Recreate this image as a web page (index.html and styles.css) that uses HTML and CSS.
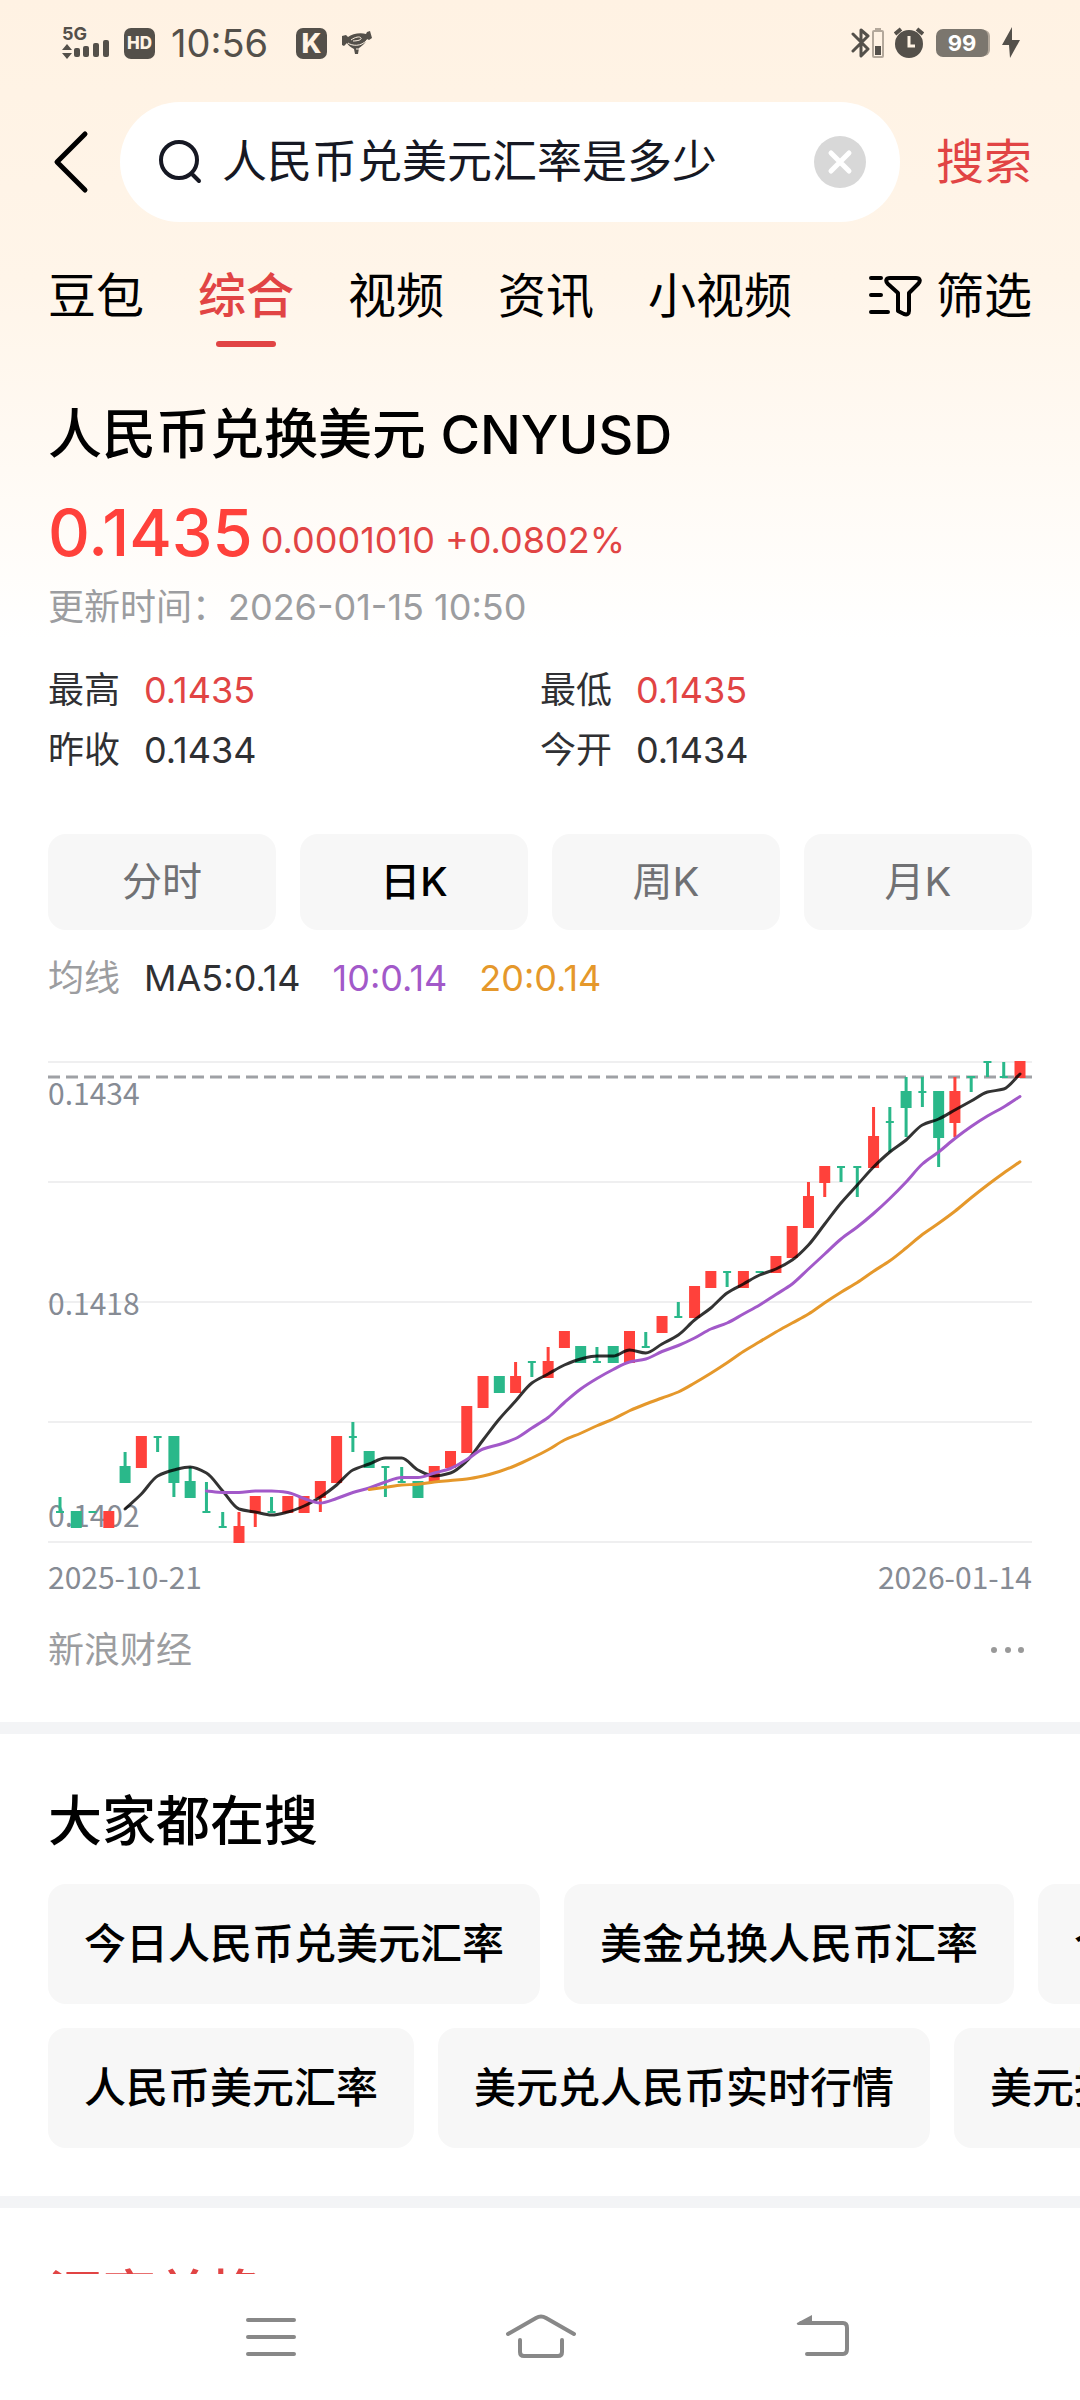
FILE: index.html
```html
<!DOCTYPE html>
<html lang="zh-CN">
<head>
    <meta charset="UTF-8">
    <meta name="viewport" content="width=device-width, initial-scale=1.0">
    <title>人民币兑美元汇率是多少</title>
    <link rel="stylesheet" href="styles.css">
</head>
<body>
    <div class="app">
        <div class="status-bar">
            <div class="status-group">
                <svg class="icon-signal" width="48" height="36" viewBox="0 0 48 36" fill="#54504a">
                    <text x="0" y="15" class="signal-text">5G</text>
                    <path d="M0 25l5-6 5 6zM0 28h10l-5 6z"/>
                    <rect x="12" y="23" width="6" height="9" rx="2"/>
                    <rect x="21" y="21" width="6" height="11" rx="2"/>
                    <rect x="31" y="18" width="6" height="14" rx="2"/>
                    <rect x="41" y="15" width="6" height="17" rx="2"/>
                </svg>
                <span class="badge badge-hd">HD</span>
                <span class="clock">10:56</span>
                <span class="badge badge-k">K</span>
                <svg class="icon-hands" width="30" height="24" viewBox="0 0 30 24">
                    <path fill="#54504a" d="M0 5l4-1 2 2c4-3 12-5 18-3l1-2 3-1 2 7-3 2-2-1c-1 4-5 7-8 9l-1 6h-3l-1-5C8 16 6 14 5 12l-3 3-2-1z"/>
                    <path fill="none" stroke="#fff3e4" stroke-width="1" d="M9 9c4-3 9-4 10-2s-4 3-8 3M6 12c4 3 13 4 19-3M14 18h3"/>
                </svg>
            </div>
            <div class="status-group">
                <svg width="34" height="32" viewBox="0 0 34 32" fill="none">
                    <path stroke="#54504a" stroke-width="3" stroke-linejoin="round" stroke-linecap="round" d="M2 7l15 15-7 7V3l7 6L2 24"/>
                    <rect x="22" y="4" width="10" height="26" rx="1" stroke="#b3a89b" stroke-width="2"/>
                    <path fill="#b3a89b" d="M24 1h6v3h-6z"/>
                    <path fill="#54504a" d="M24 19h6v9h-6z"/>
                </svg>
                <svg class="icon-alarm" width="30" height="32" viewBox="0 0 30 32" fill="none">
                    <circle cx="15" cy="17" r="14" fill="#54504a"/>
                    <path stroke="#54504a" stroke-width="4" d="M1 7l6-5M29 7l-6-5"/>
                    <path stroke="#fff3e4" stroke-width="3" d="M15 9v10h6"/>
                </svg>
                <span class="battery">99</span>
                <svg class="icon-bolt" width="18" height="32" viewBox="0 0 18 32">
                    <path fill="#54504a" d="M10 0L0 18h7l1 13L18 13h-8z"/>
                </svg>
            </div>
        </div>

        <form class="search-row">
            <button type="button" class="back" aria-label="返回">
                <svg width="36" height="64" viewBox="0 0 36 64">
                    <path fill="none" stroke="#000" stroke-width="5" stroke-linecap="round" stroke-linejoin="round" d="M32 4L4 32l28 28"/>
                </svg>
            </button>
            <div class="search-box">
                <svg width="46" height="46" viewBox="0 0 46 46">
                    <g fill="none" stroke="#161823" stroke-width="4" stroke-linecap="round">
                        <circle cx="22" cy="21" r="18"/>
                        <path d="M36 36l6 6"/>
                    </g>
                </svg>
                <input type="text" class="search-input" aria-label="搜索内容" value="人民币兑美元汇率是多少">
                <button type="button" class="clear" aria-label="清除">
                    <svg width="52" height="52" viewBox="0 0 52 52">
                        <circle cx="26" cy="26" r="26" fill="#d8d8d8"/>
                        <path stroke="#fff" stroke-width="5" stroke-linecap="round" d="M17 17l18 18M35 17L17 35"/>
                    </svg>
                </button>
            </div>
            <button type="submit" class="search-submit">搜索</button>
        </form>

        <nav class="tabs">
            <a href="#" class="tab">豆包</a>
            <a href="#" class="tab active">综合</a>
            <a href="#" class="tab">视频</a>
            <a href="#" class="tab">资讯</a>
            <a href="#" class="tab">小视频</a>
            <button type="button" class="filter">
                <svg width="54" height="42" viewBox="0 0 54 42">
                    <path fill="none" stroke="#000" stroke-width="4" stroke-linecap="round" stroke-linejoin="round" d="M3 3h10M3 20h10M3 37h17M22 3h26c4 0 5 3 2 6l-9 9v18c0 3-2 4-5 3l-6-3V18L20 9c-3-3-2-6 2-6z"/>
                </svg>
                筛选
            </button>
        </nav>

        <main class="results">
            <section class="quote">
                <h1 class="quote-title">人民币兑换美元 CNYUSD</h1>
                <div class="quote-price">
                    <span class="price">0.1435</span>
                    <span class="change">0.0001010 +0.0802%</span>
                </div>
                <p class="updated">更新时间：2026-01-15 10:50</p>

                <dl class="stats">
                    <div class="stat"><dt>最高</dt><dd class="up">0.1435</dd></div>
                    <div class="stat"><dt>最低</dt><dd class="up">0.1435</dd></div>
                    <div class="stat"><dt>昨收</dt><dd>0.1434</dd></div>
                    <div class="stat"><dt>今开</dt><dd>0.1434</dd></div>
                </dl>

                <div class="periods">
                    <button type="button" class="period">分时</button>
                    <button type="button" class="period active">日K</button>
                    <button type="button" class="period">周K</button>
                    <button type="button" class="period">月K</button>
                </div>

                <div class="legend">
                    <span class="legend-name">均线</span>
                    <span class="ma5">MA5:0.14</span>
                    <span class="ma10">10:0.14</span>
                    <span class="ma20">20:0.14</span>
                </div>

                <svg class="chart" id="chart" viewBox="0 -6 984 492">
                    <path class="grid-line" d="M0 0h984M0 120h984M0 240h984M0 360h984M0 480h984"/>
                    <path class="last-line" d="M0 15h984"/>
                    <text class="axis" x="0" y="43">0.1434</text>
                    <text class="axis" x="0" y="253">0.1418</text>
                    <text class="axis" x="0" y="465">0.1402</text>
                </svg>
                <div class="dates">
                    <span>2025-10-21</span>
                    <span>2026-01-14</span>
                </div>

                <div class="source">
                    <span>新浪财经</span>
                    <button type="button" class="more" aria-label="更多">
                        <svg width="42" height="12" viewBox="0 0 42 12" fill="#999">
                            <circle cx="4" cy="6" r="3"/>
                            <circle cx="18" cy="6" r="3"/>
                            <circle cx="31" cy="6" r="3"/>
                        </svg>
                    </button>
                </div>
            </section>

            <section class="related">
                <h2 class="section-title">大家都在搜</h2>
                <div class="chips">
                    <a href="#" class="chip">今日人民币兑美元汇率</a>
                    <a href="#" class="chip">美金兑换人民币汇率</a>
                    <a href="#" class="chip">今日美元汇率</a>
                </div>
                <div class="chips">
                    <a href="#" class="chip">人民币美元汇率</a>
                    <a href="#" class="chip">美元兑人民币实时行情</a>
                    <a href="#" class="chip">美元换人民币</a>
                </div>
            </section>

            <section class="related">
                <h2 class="section-title up">汇率兑换</h2>
            </section>
        </main>

        <div class="system-nav">
            <button type="button" aria-label="最近任务">
                <svg width="72" height="48" viewBox="0 0 72 48">
                    <path stroke="#888" stroke-width="4" stroke-linecap="round" d="M13 7h46M13 24h46M13 41h46"/>
                </svg>
            </button>
            <button type="button" aria-label="主屏幕">
                <svg width="72" height="48" viewBox="0 0 72 48">
                    <path fill="none" stroke="#888" stroke-width="4" stroke-linecap="round" stroke-linejoin="round" d="M3 21L31 5q5-3 10 0l28 16M15 27v12q0 4 4 4h34q4 0 4-4V27"/>
                </svg>
            </button>
            <button type="button" class="nav-back" aria-label="返回上一页">
                <svg width="72" height="48" viewBox="0 0 72 48">
                    <path fill="none" stroke="#888" stroke-width="4" stroke-linecap="round" d="M14 10h42q4 0 4 5v21q0 5-4 5H20"/>
                    <path fill="#888" d="M10 10L25 2v10H11q-2-1-1-2z"/>
                </svg>
            </button>
        </div>
    </div>

    <script src="chart.js"></script>
</body>
</html>
```

FILE: styles.css
```css
:root {
    --red: #e14444;
    --up: #ff413b;
    --down: #2ab88a;
    --text: #2f3033;
    --muted: #9c9da0;
    --status: #54504a;
    --tile: #f7f7f7;
}

* {
    box-sizing: border-box;
}

body {
    margin: 0;
    font-family: Inter, "Noto Sans CJK SC", sans-serif;
    font-size: 36px;
    line-height: 48px;
    color: #000;
}

h1, h2, p, dl, dd {
    margin: 0;
}

a {
    color: inherit;
    text-decoration: none;
}

button {
    padding: 0;
    border: none;
    background: none;
    font: inherit;
    color: inherit;
    cursor: pointer;
}

svg {
    display: block;
}

.app {
    display: flex;
    flex-direction: column;
    height: 100vh;
    background: #fff linear-gradient(#fff2e3, #fff5e9 280px, #fffaf4 470px, #fff 640px) no-repeat;
}

/* status bar */
.status-bar {
    display: flex;
    justify-content: space-between;
    height: 86px;
    padding: 0 60px 0 62px;
    color: var(--status);
}

.status-group {
    display: flex;
    align-items: center;
}

.icon-signal {
    overflow: visible;
}

.signal-text {
    font-size: 18px;
    font-weight: 700;
}

.badge {
    width: 31px;
    height: 31px;
    border-radius: 7px;
    background: var(--status);
    color: #fff3e4;
    text-align: center;
    font-weight: 800;
    line-height: 31px;
}

.badge-hd {
    margin: 0 16px 0 14px;
    font-size: 17px;
}

.badge-k {
    margin: 0 15px 0 28px;
    font-size: 27px;
}

.clock {
    font-size: 38px;
}

.icon-alarm {
    margin: 0 12px 0 9px;
}

.battery {
    width: 52px;
    height: 28px;
    margin-right: 14px;
    border-radius: 7px;
    background: #7b766e;
    box-shadow: 3px 0 0 -1px #b3a89b;
    color: #fff;
    text-align: center;
    font-size: 22px;
    font-weight: 700;
    line-height: 28px;
}

/* search */
.search-row {
    display: flex;
    align-items: center;
    padding: 16px 48px 0 53px;
}

.search-box {
    display: flex;
    flex: 1;
    align-items: center;
    min-width: 0;
    height: 120px;
    margin: 0 36px 0 31px;
    padding: 0 34px 0 37px;
    border-radius: 60px;
    background: #fff;
}

.search-input {
    flex: 1;
    min-width: 0;
    padding: 0 0 0 19px;
    border: none;
    outline: none;
    background: none;
    color: #161823;
    font: inherit;
    font-size: 45px;
    line-height: 60px;
}

.search-submit {
    flex: none;
    color: var(--red);
    font-size: 48px;
    line-height: 60px;
}

/* tabs */
.tabs {
    display: flex;
    align-items: flex-start;
    gap: 54px;
    margin-top: 44px;
    padding: 0 48px;
    font-size: 48px;
    line-height: 60px;
}

.tab {
    position: relative;
    padding-bottom: 21px;
}

.tab.active {
    color: var(--red);
    font-weight: 500;
}

.tab.active::after {
    content: "";
    position: absolute;
    bottom: 0;
    left: 18px;
    right: 18px;
    height: 6px;
    border-radius: 3px;
    background: var(--red);
}

.filter {
    display: flex;
    align-items: center;
    gap: 14px;
    margin-left: auto;
    line-height: 60px;
}

/* quote card */
.results {
    flex: 1;
    min-height: 0;
    overflow: hidden;
}

.quote {
    padding: 52px 48px 48px;
}

.quote-title,
.section-title {
    font-size: 54px;
    font-weight: 500;
    line-height: 72px;
}

.quote-price {
    display: flex;
    align-items: flex-end;
    gap: 8px;
    margin-top: 20px;
}

.price {
    color: var(--up);
    font-size: 65px;
    font-weight: 500;
    line-height: 84px;
}

.change {
    color: var(--red);
    line-height: 70px;
}

.updated {
    margin-top: 8px;
    color: var(--muted);
}

.stats {
    display: grid;
    grid-template-columns: 1fr 1fr;
    row-gap: 12px;
    margin-top: 35px;
    color: var(--text);
}

.stat {
    display: flex;
    gap: 24px;
}

.up {
    color: var(--red);
}

.periods {
    display: grid;
    grid-template-columns: repeat(4, 1fr);
    gap: 24px;
    margin-top: 60px;
}

.period {
    height: 96px;
    border-radius: 18px;
    background: var(--tile);
    color: #707174;
    font-size: 40px;
}

.period.active {
    color: #000;
    font-weight: 500;
}

.legend {
    display: flex;
    gap: 32px;
    margin-top: 24px;
}

.legend-name {
    margin-right: -8px;
    color: var(--muted);
}

.ma5 {
    color: var(--text);
}

.ma10 {
    color: #a259c9;
}

.ma20 {
    color: #e5982b;
}

/* chart */
.chart {
    width: 100%;
    margin-top: 54px;
}

.grid-line {
    stroke: #efeff0;
    stroke-width: 2;
}

.last-line {
    stroke: #9fa1a5;
    stroke-width: 3;
    stroke-dasharray: 12 6;
}

.axis {
    fill: #868b94;
    font-family: "Noto Sans CJK SC", sans-serif;
    font-size: 30px;
}

.candle-up {
    fill: var(--up);
}

.candle-down {
    fill: var(--down);
}

.ma-line {
    fill: none;
    stroke-width: 3;
    stroke-linecap: round;
}

.dates {
    display: flex;
    justify-content: space-between;
    margin-top: 10px;
    color: #868b94;
    font-family: "Noto Sans CJK SC", sans-serif;
    font-size: 30px;
    line-height: 36px;
}

.source {
    display: flex;
    align-items: center;
    justify-content: space-between;
    margin-top: 32px;
    color: var(--muted);
}

/* related searches */
.related {
    padding: 52px 48px 48px;
    border-top: 12px solid #f3f4f6;
    overflow: hidden;
}

.chips {
    display: flex;
    gap: 24px;
    margin-top: 24px;
}

.section-title + .chips {
    margin-top: 26px;
}

.chip {
    flex: none;
    padding: 30px 36px;
    border-radius: 18px;
    background: var(--tile);
    font-size: 42px;
    font-weight: 500;
    line-height: 60px;
}

/* system navigation */
.system-nav {
    display: flex;
    flex: none;
    justify-content: center;
    align-items: center;
    gap: 198px;
    height: 126px;
    padding-left: 14px;
    background: #fff;
}

.nav-back {
    margin-left: 12px;
}
```

FILE: chart.js
```js
// [up, bodyTop, bodyBottom, high, low] in steps of 0.0001 above 0.1402
const candles = [
    [0, 2, 2, 3, 2], [0, 2, 1, 2, 1], [0, 2, 2, 2, 2], [1, 2, 1, 2, 1], [0, 5, 4, 6, 4],
    [1, 7, 5, 7, 5], [0, 7, 7, 7, 6], [0, 7, 4, 7, 3], [0, 4, 3, 5, 3], [0, 2, 2, 4, 2],
    [0, 1, 1, 2, 1], [1, 1, 0, 2, 0], [1, 3, 2, 3, 1], [0, 2, 2, 3, 2], [1, 3, 2, 3, 2],
    [1, 3, 2, 3, 2], [1, 4, 3, 4, 2], [1, 7, 4, 7, 4], [0, 7, 7, 8, 6], [0, 6, 5, 6, 5],
    [0, 5, 5, 5, 3], [0, 4, 4, 5, 4], [0, 4, 3, 4, 3], [1, 5, 4, 5, 4], [1, 6, 5, 6, 5],
    [1, 9, 6, 9, 6], [1, 11, 9, 11, 9], [0, 11, 10, 11, 10], [1, 11, 10, 12, 10], [0, 12, 12, 12, 11],
    [1, 12, 11, 13, 11], [1, 14, 13, 14, 13], [0, 13, 12, 13, 12], [0, 12, 12, 13, 12], [0, 13, 12, 13, 12],
    [1, 14, 12, 14, 12], [0, 13, 13, 14, 13], [1, 15, 14, 15, 14], [0, 15, 15, 16, 15], [1, 17, 15, 17, 15],
    [1, 18, 17, 18, 17], [0, 18, 18, 18, 17], [1, 18, 17, 18, 17], [0, 18, 18, 18, 18], [1, 19, 18, 19, 18],
    [1, 21, 19, 21, 19], [1, 23, 21, 24, 21], [1, 25, 24, 25, 23], [0, 25, 25, 25, 24], [0, 25, 25, 25, 23],
    [1, 27, 25, 29, 25], [0, 28, 28, 29, 26], [0, 30, 29, 31, 27], [0, 30, 30, 31, 29], [0, 30, 27, 30, 25],
    [1, 30, 28, 31, 27], [0, 31, 31, 31, 30], [0, 32, 32, 32, 31], [0, 31, 31, 32, 31], [1, 32, 31, 32, 31]
];

const chart = document.getElementById('chart');
const x = i => 12 + i * 960 / 59;
const y = level => (32 - level) * 15;

function add(name, attrs) {
    const el = document.createElementNS('http://www.w3.org/2000/svg', name);
    for (const key in attrs) {
        el.setAttribute(key, attrs[key]);
    }
    chart.appendChild(el);
}

function bar(className, center, top, bottom, width) {
    add('rect', { class: className, x: center - width / 2, y: top, width: width, height: bottom - top });
}

candles.forEach(([up, top, bottom, high, low], i) => {
    const className = up ? 'candle-up' : 'candle-down';
    if (high > low) {
        bar(className, x(i), y(high), y(low), 3);
    }
    // open and close are equal: draw a short tick
    bar(className, x(i), y(top) - 1, y(bottom) + 1, top === bottom ? 8 : 11);
});

// moving averages over the closing level
const closes = candles.map(([up, top, bottom]) => up ? top : bottom);

function movingAverage(days) {
    const points = [];
    for (let i = days - 1; i < closes.length; i++) {
        const sum = closes.slice(i - days + 1, i + 1).reduce((a, b) => a + b, 0);
        points.push([x(i), y(sum / days)]);
    }
    return points;
}

// smooth path that does not overshoot its points
function smooth(points) {
    const slope = i => (points[i + 1][1] - points[i][1]) / (points[i + 1][0] - points[i][0]);
    const tangents = points.map((p, i) => {
        if (i === 0) return slope(0);
        if (i === points.length - 1) return slope(i - 1);
        const a = slope(i - 1);
        const b = slope(i);
        return a * b <= 0 ? 0 : 2 * a * b / (a + b);
    });
    let d = `M${points[0]}`;
    for (let i = 1; i < points.length; i++) {
        const [x0, y0] = points[i - 1];
        const [x1, y1] = points[i];
        const h = (x1 - x0) / 3;
        d += `C${x0 + h} ${y0 + tangents[i - 1] * h} ${x1 - h} ${y1 - tangents[i] * h} ${x1} ${y1}`;
    }
    return d;
}

add('path', { class: 'ma-line', stroke: 'rgba(0, 0, 0, 0.8)', d: smooth(movingAverage(5)) });
add('path', { class: 'ma-line', stroke: '#a259c9', d: smooth(movingAverage(10)) });
add('path', { class: 'ma-line', stroke: '#e5982b', d: smooth(movingAverage(20)) });
```
